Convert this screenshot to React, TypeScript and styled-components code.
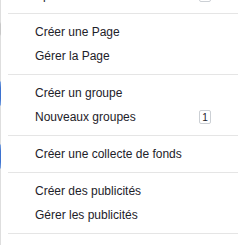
import styled, { createGlobalStyle } from 'styled-components';

const GlobalStyle = createGlobalStyle`
  html, body {
    margin: 0;
    padding: 0;
    background: #fff;
    height: 245px;
    overflow: hidden;
  }
  body {
    font-family: 'Liberation Sans', Arial, sans-serif;
  }
`;

/* Component Style */
const Page = styled.div`
  display: flex;
  height: 245px;
  overflow: hidden;
`;
const Rail = styled.div`
  flex: 0 0 1px;
  height: 245px;
  background: linear-gradient(
    to bottom,
    #dedede 0px,
    #dedede 22px,
    #c8c8c8 24px,
    #c8c8c8 34px,
    #dedede 36px,
    #dedede 81px,
    #7ba2e0 82px,
    #3d72cf 88px,
    #3d72cf 99px,
    #7ba2e0 105px,
    #dedede 106px,
    #dedede 144px,
    #7ba2e0 145px,
    #3d72cf 151px,
    #3d72cf 162px,
    #7ba2e0 168px,
    #dedede 169px,
    #dedede 245px
  );
`;
const Menu = styled.ul`
  list-style: none;
  margin: -23px 0 0 0;
  padding: 0;
  flex: 0 0 245px;
  width: 245px;
`;
const Section = styled.li`
  margin: 0 8px 0 7px;
  padding: 6px 0;
  min-height: 1px;
  & + li {
    border-top: 1px solid #e5e5e5;
  }
`;
const Group = styled.ul`
  list-style: none;
  margin: 0;
  padding: 0;
`;
const Item = styled.li`
  display: flex;
  align-items: center;
  justify-content: space-between;
  height: 24px;
  padding: 0 27px 0 27px;
  font-size: 12px;
  color: #1d2129;
  white-space: nowrap;
  cursor: pointer;
`;
const Badge = styled.span`
  display: inline-flex;
  align-items: center;
  justify-content: center;
  box-sizing: border-box;
  width: 12px;
  height: 14px;
  border: 1px solid #ccd0d5;
  border-radius: 2px;
  font-size: 10px;
  color: #1d2129;
  background: #fff;
`;

interface Entry {
  label: string;
  count?: number;
}

const sections: Entry[][] = [
  [{ label: 'Spectacles', count: 1 }],
  [{ label: 'Créer une Page' }, { label: 'Gérer la Page' }],
  [{ label: 'Créer un groupe' }, { label: 'Nouveaux groupes', count: 1 }],
  [{ label: 'Créer une collecte de fonds' }],
  [{ label: 'Créer des publicités' }, { label: 'Gérer les publicités' }],
  [],
];

const App = () => {
  return (
    <>
      <GlobalStyle />
      <Page>
        <Rail />
        <Menu>
          {sections.map((group, index) => (
            <Section key={index}>
              <Group>
                {group.map((item) => (
                  <Item key={item.label}>
                    <span>{item.label}</span>
                    {item.count && <Badge>{item.count}</Badge>}
                  </Item>
                ))}
              </Group>
            </Section>
          ))}
        </Menu>
      </Page>
    </>
  );
};

export default App;
